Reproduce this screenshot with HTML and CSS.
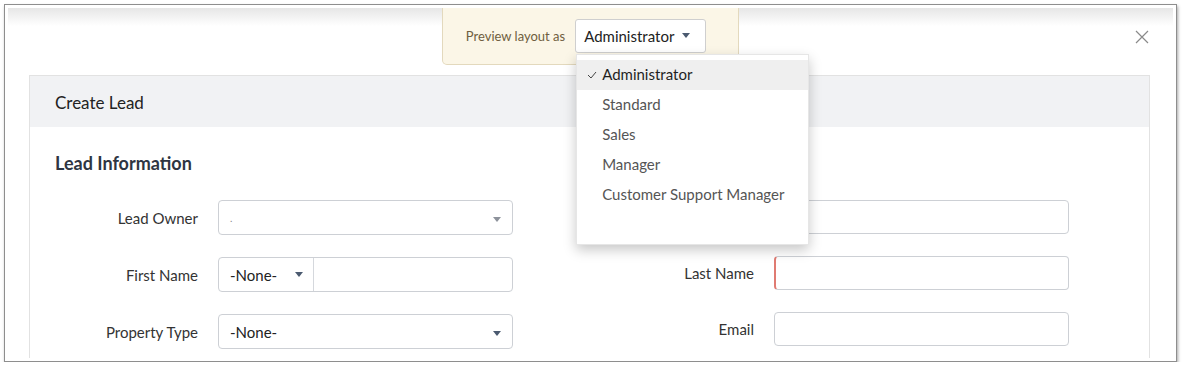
FILE: index.html
```html
<!DOCTYPE html>
<html lang="en">
<head>
  <meta charset="UTF-8" />
  <meta name="viewport" content="width=device-width, initial-scale=1" />
  <title>Create Lead - Preview</title>
  <link rel="stylesheet" href="styles.css">
</head>
<body>

  <div class="window">
    <div class="inner">

      <div class="topbar">
        <div class="preview">
          <span class="preview-label">Preview layout as</span>
          <div class="layout-select">
            <span>Administrator</span>
            <svg class="caret" width="8" height="5" viewBox="0 0 8 5"><path d="M0 0h8L4 5z" /></svg>

            <ul class="menu">
              <li class="active">
                <svg class="check" width="10" height="8" viewBox="0 0 10 8"><path d="M1 4l3 3 5-6" /></svg>
                Administrator
              </li>
              <li>Standard</li>
              <li>Sales</li>
              <li>Manager</li>
              <li>Customer Support Manager</li>
            </ul>
          </div>
        </div>
        <button class="close-btn" aria-label="Close">
          <svg width="14" height="14" viewBox="0 0 14 14"><path d="M1 1l12 12M13 1L1 13" /></svg>
        </button>
      </div>

      <div class="form">
        <div class="form-head">Create Lead</div>
        <div class="form-body">
          <h3>Lead Information</h3>

          <div class="columns">
            <div class="col col-left">
              <div class="field">
                <label>Lead Owner</label>
                <div class="control select">
                  <span class="placeholder">.</span>
                  <svg class="caret muted" width="8" height="5" viewBox="0 0 8 5"><path d="M0 0h8L4 5z" /></svg>
                </div>
              </div>
              <div class="field">
                <label>First Name</label>
                <div class="control split">
                  <div class="salutation">
                    <span>-None-</span>
                    <svg class="caret" width="8" height="5" viewBox="0 0 8 5"><path d="M0 0h8L4 5z" /></svg>
                  </div>
                  <div class="split-input"></div>
                </div>
              </div>
              <div class="field">
                <label>Property Type</label>
                <div class="control select">
                  <span>-None-</span>
                  <svg class="caret" width="8" height="5" viewBox="0 0 8 5"><path d="M0 0h8L4 5z" /></svg>
                </div>
              </div>
            </div>

            <div class="col col-right">
              <div class="field">
                <label>Company</label>
                <div class="control"></div>
              </div>
              <div class="field">
                <label>Last Name</label>
                <div class="control required"></div>
              </div>
              <div class="field">
                <label>Email</label>
                <div class="control"></div>
              </div>
            </div>
          </div>
        </div>
      </div>

    </div>
  </div>

</body>
</html>
```

FILE: styles.css
```css
* { box-sizing: border-box; margin: 0; padding: 0; font-family: 'Lato', 'Open Sans', sans-serif; }

body {
  background: #fff;
  color: #333;
  overflow: hidden;
}

.window {
  margin: 4px 5px 0 4px;
  border: 1px solid #8e8e8e;
  padding: 3px;
  box-shadow: 1px 2px 3px rgba(0,0,0,0.35);
  background: #fff;
}

.inner {
  position: relative;
  height: 350px;
  overflow: hidden;
  background: linear-gradient(#e6e6e6, #fff 18px);
}

/* top bar: preview selector + close */
.topbar {
  display: grid;
  grid-template-columns: 1fr auto 1fr;
  height: 67px;
}

.preview {
  grid-column: 2;
  display: flex;
  align-items: center;
  gap: 10px;
  height: 57px;
  padding: 0 32px 1px 23px;
  background: #fbf6e7;
  border: 1px solid #e3d9bd;
  border-top: none;
  border-radius: 0 0 5px 5px;
  position: relative;
  z-index: 2;
}

.preview-label {
  font-size: 13px;
  color: #6f5e40;
}

.layout-select {
  position: relative;
  display: flex;
  align-items: center;
  justify-content: space-between;
  width: 131px;
  height: 34px;
  padding: 0 15px 0 8px;
  background: #fff;
  border: 1px solid #cfcfcf;
  border-radius: 3px;
  font-size: 15px;
  color: #222;
}

.caret path { fill: #4b5a70; }
.caret.muted path { fill: #8d929b; }

.menu {
  position: absolute;
  top: 34px;
  left: 0;
  width: 233px;
  padding: 5px 0 34px;
  list-style: none;
  background: #fff;
  border: 1px solid #e6e6e6;
  box-shadow: 0 5px 12px rgba(0,0,0,0.22);
  z-index: 5;
}

.menu li {
  height: 30px;
  line-height: 29px;
  padding-left: 25px;
  font-size: 15px;
  color: #555;
  position: relative;
}

.menu li.active {
  background: #efefef;
  color: #1f1f1f;
}

.check {
  position: absolute;
  left: 10px;
  top: 11px;
}

.check path {
  fill: none;
  stroke: #444;
  stroke-width: 1;
}

.close-btn {
  justify-self: end;
  align-self: start;
  margin: 22px 24px 0 0;
  width: 14px;
  height: 14px;
  background: none;
  border: none;
  cursor: pointer;
}

.close-btn path {
  stroke: #8a8a8a;
  stroke-width: 1.2;
}

/* form */
.form {
  margin: 0 23px 0 21px;
  height: 283px;
  border: 1px solid #e2e2e2;
  border-bottom: none;
}

.form-head {
  height: 51px;
  display: flex;
  align-items: center;
  padding: 2px 0 0 25px;
  background: #f1f2f4;
  font-size: 17px;
  color: #222;
}

.form-body h3 {
  padding: 24px 0 0 25px;
  font-size: 18px;
  line-height: 24px;
  font-weight: 700;
  color: #2e3542;
  margin-bottom: 25px;
}

.columns {
  display: flex;
}

.col {
  display: flex;
  flex-direction: column;
  gap: 22px;
}

.field {
  display: flex;
  align-items: center;
}

.field label {
  width: 168px;
  margin-right: 20px;
  text-align: right;
  font-size: 15px;
  color: #333;
}

.col-right .field label {
  width: 241px;
}

.control {
  width: 295px;
  height: 34px;
  background: #fff;
  border: 1px solid #cdd0d5;
  border-radius: 4px;
}

.col-left .control {
  height: 35px;
}

.control.required {
  border-left: 2px solid #e07b72;
}

.select {
  display: flex;
  align-items: center;
  justify-content: space-between;
  padding: 0 11px 0 11px;
  font-size: 15px;
  color: #222;
}

.select .caret {
  margin-top: 4px;
}

.placeholder {
  font-size: 10px;
  color: #888;
}

.split {
  display: flex;
}

.salutation {
  width: 95px;
  display: flex;
  align-items: center;
  justify-content: space-between;
  padding: 0 10px 0 11px;
  border-right: 1px solid #d5d8dd;
  font-size: 15px;
  color: #222;
}

.split-input {
  flex: 1;
}
```
